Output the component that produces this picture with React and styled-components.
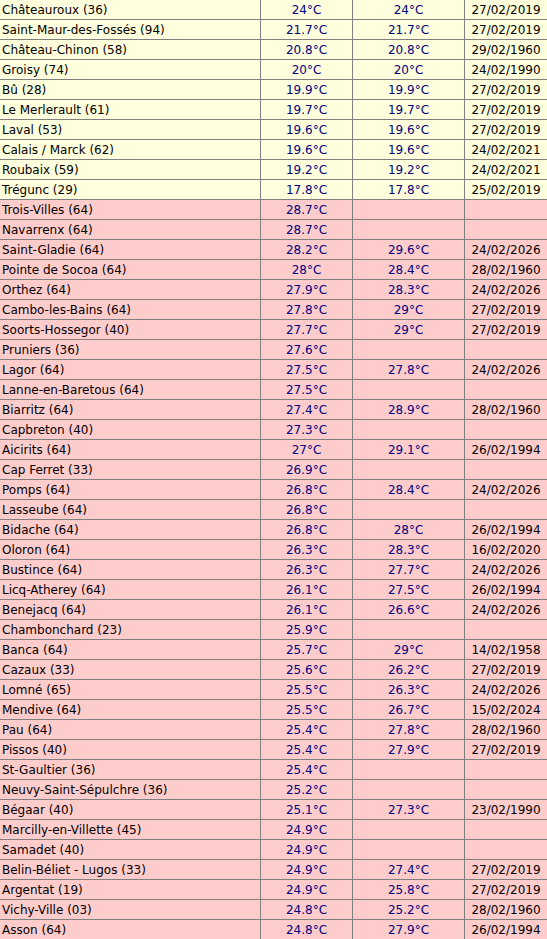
import styled, { createGlobalStyle } from "styled-components";

const GlobalStyle = createGlobalStyle`
  html, body {
    margin: 0;
    padding: 0;
    background: #ffffff;
  }
  body {
    font-family: "DejaVu Sans", Verdana, sans-serif;
    font-size: 12px;
  }
`;

const Table = styled.table`
  border-collapse: separate;
  border-spacing: 0;
  table-layout: fixed;
  width: 548px;
`;

const Col = styled.col`
  width: ${(p) => p.$w}px;
`;

const Row = styled.tr`
  background: ${(p) => (p.$tone === "cold" ? "#ffffdd" : "#ffcccc")};
`;

const Cell = styled.td`
  box-sizing: border-box;
  height: 20px;
  padding: 2px 0 0 ${(p) => (p.$name ? "2px" : "0")};
  border-right: 1px solid #808080;
  border-bottom: 1px solid #808080;
  line-height: 17px;
  vertical-align: top;
  white-space: nowrap;
  overflow: hidden;
  text-align: ${(p) => (p.$name ? "left" : "center")};
  color: ${(p) => (p.$temp ? "#000080" : "#000000")};
`;

const cold = [
  ["Châteauroux (36)", "24°C", "24°C", "27/02/2019"],
  ["Saint-Maur-des-Fossés (94)", "21.7°C", "21.7°C", "27/02/2019"],
  ["Château-Chinon (58)", "20.8°C", "20.8°C", "29/02/1960"],
  ["Groisy (74)", "20°C", "20°C", "24/02/1990"],
  ["Bû (28)", "19.9°C", "19.9°C", "27/02/2019"],
  ["Le Merlerault (61)", "19.7°C", "19.7°C", "27/02/2019"],
  ["Laval (53)", "19.6°C", "19.6°C", "27/02/2019"],
  ["Calais / Marck (62)", "19.6°C", "19.6°C", "24/02/2021"],
  ["Roubaix (59)", "19.2°C", "19.2°C", "24/02/2021"],
  ["Trégunc (29)", "17.8°C", "17.8°C", "25/02/2019"],
];

const warm = [
  ["Trois-Villes (64)", "28.7°C", "", ""],
  ["Navarrenx (64)", "28.7°C", "", ""],
  ["Saint-Gladie (64)", "28.2°C", "29.6°C", "24/02/2026"],
  ["Pointe de Socoa (64)", "28°C", "28.4°C", "28/02/1960"],
  ["Orthez (64)", "27.9°C", "28.3°C", "24/02/2026"],
  ["Cambo-les-Bains (64)", "27.8°C", "29°C", "27/02/2019"],
  ["Soorts-Hossegor (40)", "27.7°C", "29°C", "27/02/2019"],
  ["Pruniers (36)", "27.6°C", "", ""],
  ["Lagor (64)", "27.5°C", "27.8°C", "24/02/2026"],
  ["Lanne-en-Baretous (64)", "27.5°C", "", ""],
  ["Biarritz (64)", "27.4°C", "28.9°C", "28/02/1960"],
  ["Capbreton (40)", "27.3°C", "", ""],
  ["Aicirits (64)", "27°C", "29.1°C", "26/02/1994"],
  ["Cap Ferret (33)", "26.9°C", "", ""],
  ["Pomps (64)", "26.8°C", "28.4°C", "24/02/2026"],
  ["Lasseube (64)", "26.8°C", "", ""],
  ["Bidache (64)", "26.8°C", "28°C", "26/02/1994"],
  ["Oloron (64)", "26.3°C", "28.3°C", "16/02/2020"],
  ["Bustince (64)", "26.3°C", "27.7°C", "24/02/2026"],
  ["Licq-Atherey (64)", "26.1°C", "27.5°C", "26/02/1994"],
  ["Benejacq (64)", "26.1°C", "26.6°C", "24/02/2026"],
  ["Chambonchard (23)", "25.9°C", "", ""],
  ["Banca (64)", "25.7°C", "29°C", "14/02/1958"],
  ["Cazaux (33)", "25.6°C", "26.2°C", "27/02/2019"],
  ["Lomné (65)", "25.5°C", "26.3°C", "24/02/2026"],
  ["Mendive (64)", "25.5°C", "26.7°C", "15/02/2024"],
  ["Pau (64)", "25.4°C", "27.8°C", "28/02/1960"],
  ["Pissos (40)", "25.4°C", "27.9°C", "27/02/2019"],
  ["St-Gaultier (36)", "25.4°C", "", ""],
  ["Neuvy-Saint-Sépulchre (36)", "25.2°C", "", ""],
  ["Bégaar (40)", "25.1°C", "27.3°C", "23/02/1990"],
  ["Marcilly-en-Villette (45)", "24.9°C", "", ""],
  ["Samadet (40)", "24.9°C", "", ""],
  ["Belin-Béliet - Lugos (33)", "24.9°C", "27.4°C", "27/02/2019"],
  ["Argentat (19)", "24.9°C", "25.8°C", "27/02/2019"],
  ["Vichy-Ville (03)", "24.8°C", "25.2°C", "28/02/1960"],
  ["Asson (64)", "24.8°C", "27.9°C", "26/02/1994"],
];

function Line({ row, tone }) {
  const [name, today, record, date] = row;
  return (
    <Row $tone={tone}>
      <Cell $name>{name}</Cell>
      <Cell $temp>{today}</Cell>
      <Cell $temp>{record}</Cell>
      <Cell>{date}</Cell>
    </Row>
  );
}

export default function App() {
  return (
    <>
      <GlobalStyle />
      <Table>
        <colgroup>
          <Col $w={261} />
          <Col $w={92} />
          <Col $w={112} />
          <Col $w={83} />
        </colgroup>
        <tbody>
          {cold.map((r) => (
            <Line key={r[0]} row={r} tone="cold" />
          ))}
          {warm.map((r) => (
            <Line key={r[0]} row={r} tone="warm" />
          ))}
        </tbody>
      </Table>
    </>
  );
}
